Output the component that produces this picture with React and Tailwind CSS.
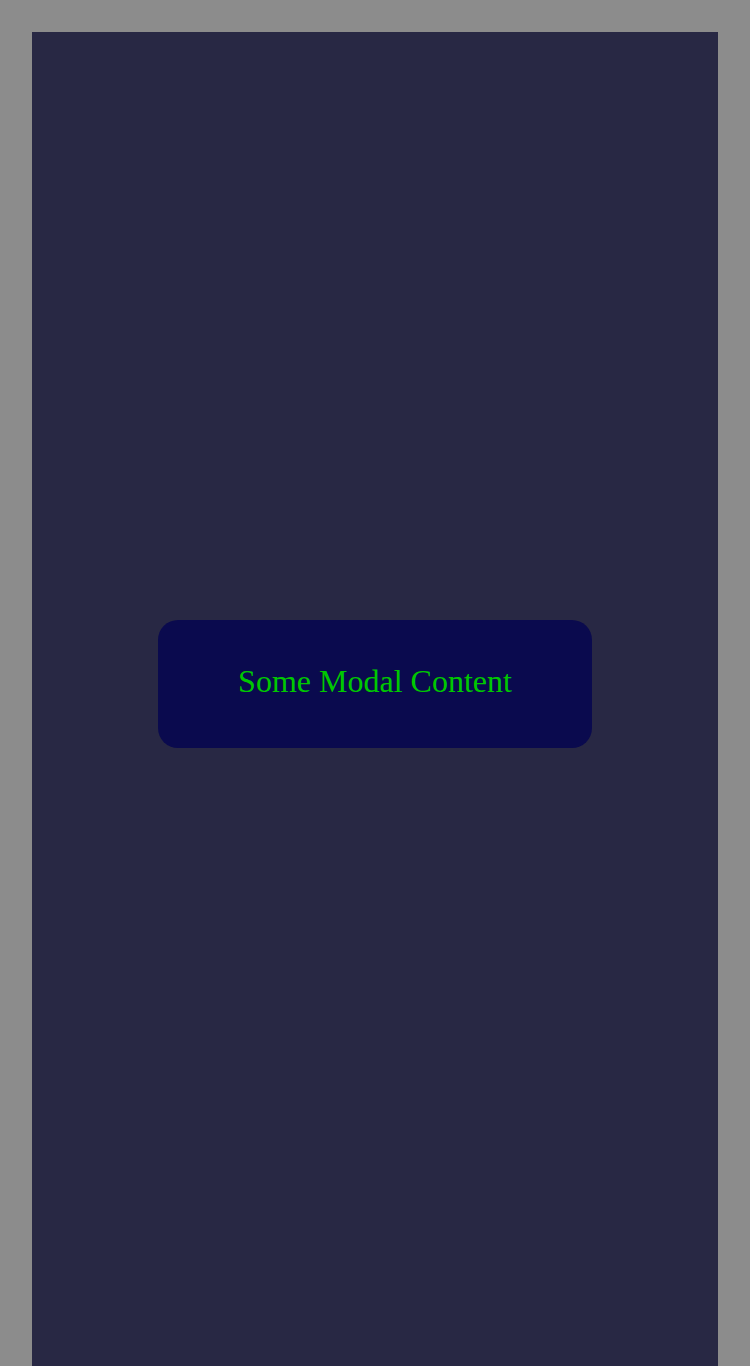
export default function App() {
  return (
    <div className="min-h-screen bg-[#8c8c8c] px-8 pt-8">
      <div className="h-screen w-full bg-[#282844]" />
      <div className="fixed inset-0 flex items-center justify-center">
        <div
          className="mt-[2px] h-[128px] w-[434px] rounded-[20px] bg-[#0a0a4e] pt-[43px] text-center text-[32px] leading-[36px] text-[#00c800]"
          style={{ fontFamily: '"Liberation Serif", "Times New Roman", serif' }}
        >
          Some Modal Content
        </div>
      </div>
    </div>
  );
}
